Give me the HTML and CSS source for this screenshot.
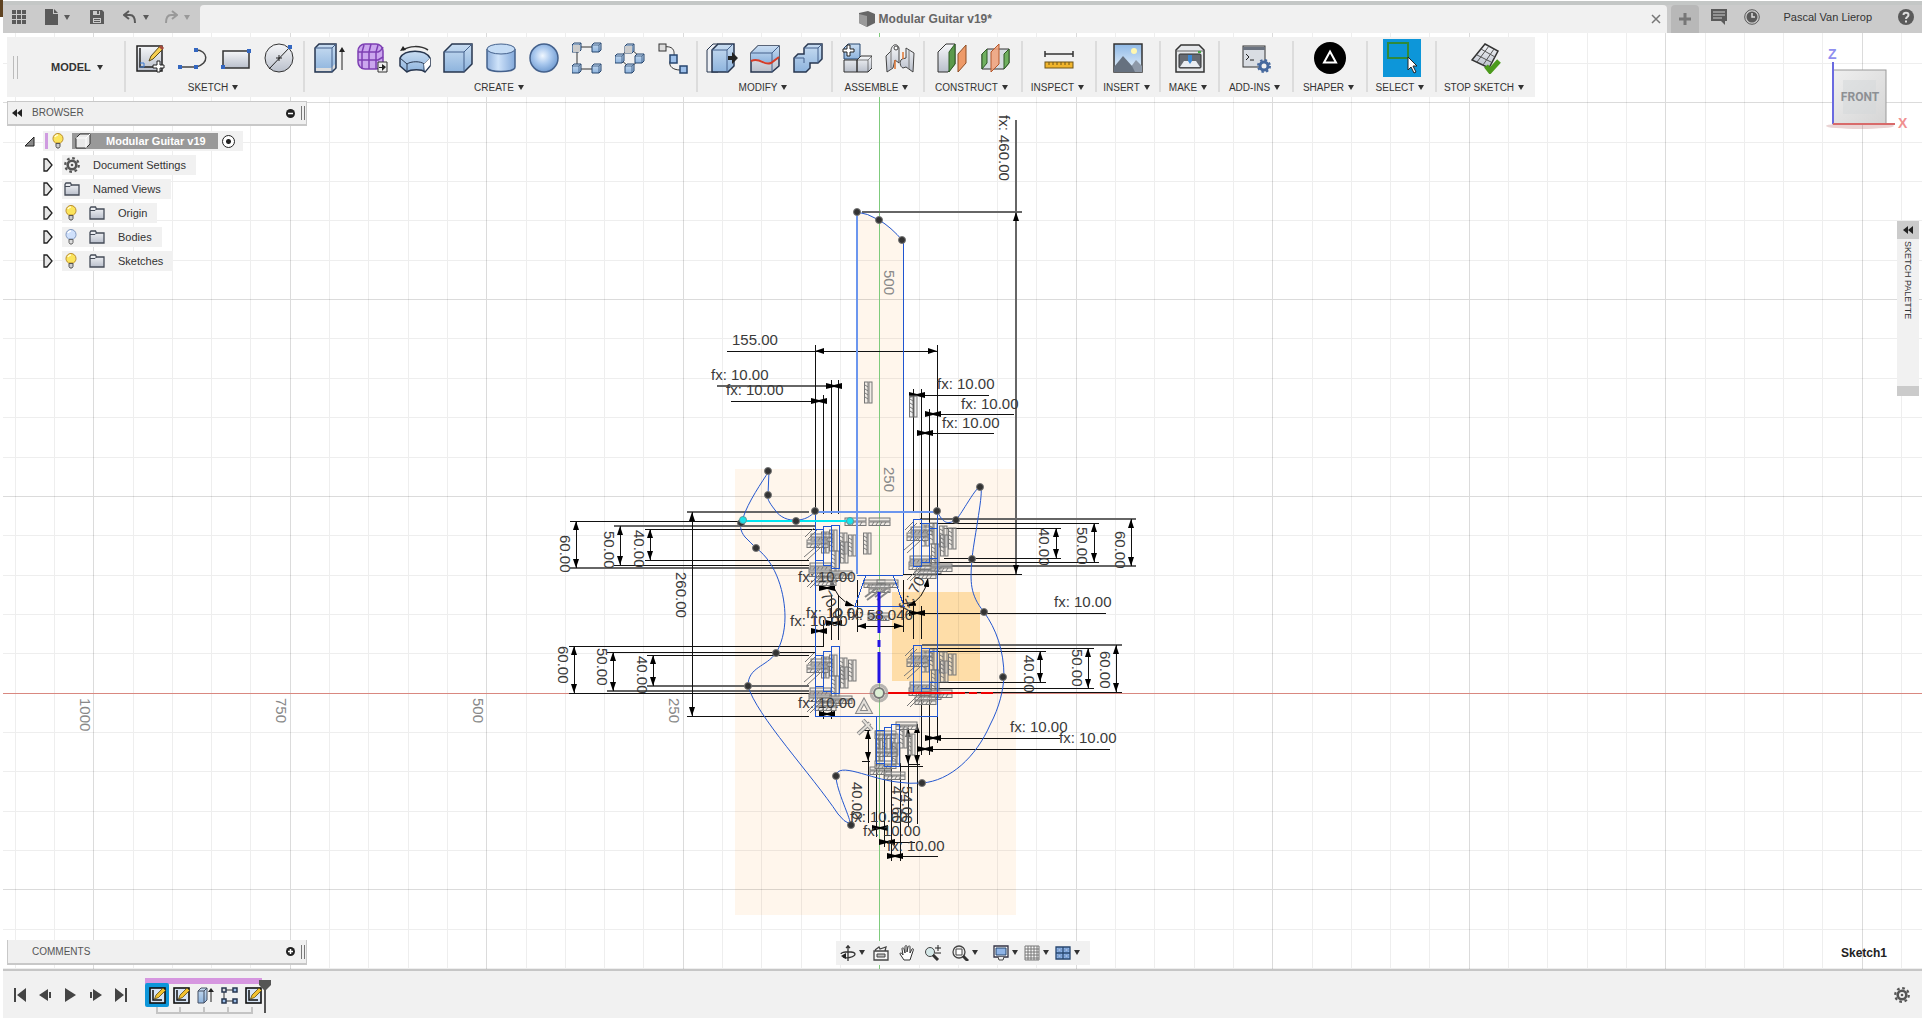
FILE: index.html
```html
<!DOCTYPE html>
<html lang="en">
<head>
<meta charset="utf-8">
<title>Modular Guitar v19*</title>
<link rel="stylesheet" href="styles.css">
</head>
<body>
<svg class="defs" aria-hidden="true">
<defs>
<linearGradient id="blue" x1="0" y1="0" x2="0" y2="1"><stop offset="0" stop-color="#c9ddf2"/><stop offset="1" stop-color="#8db3dd"/></linearGradient>
<linearGradient id="blueSide" x1="0" y1="0" x2="1" y2="0"><stop offset="0" stop-color="#8fb0dc"/><stop offset=".4" stop-color="#cfe3fa"/><stop offset="1" stop-color="#83a9da"/></linearGradient>
<linearGradient id="steel" x1="0" y1="0" x2="0" y2="1"><stop offset="0" stop-color="#f6f7f9"/><stop offset="1" stop-color="#b9bfcb"/></linearGradient>
<linearGradient id="sky" x1="0" y1="0" x2="0" y2="1"><stop offset="0" stop-color="#8fb9e6"/><stop offset="1" stop-color="#e8f2fb"/></linearGradient>
<linearGradient id="cubeFace" x1="0" y1="0" x2="1" y2="1"><stop offset="0" stop-color="#efefef"/><stop offset="1" stop-color="#d5d5d5"/></linearGradient>
<radialGradient id="ball" cx=".45" cy=".42" r=".6"><stop offset="0" stop-color="#f0f7ff"/><stop offset=".5" stop-color="#a9c8ee"/><stop offset="1" stop-color="#6f9ad0"/></radialGradient>
<symbol id="bulb" viewBox="0 0 12 16"><path d="M3.500 10C1.500 8.500 1 7 1 5.500a5 5 0 0 1 10 0c0 1.500-.5 3-2.500 4.500z" fill="#fbe45c" stroke="#b98b2a"/><path d="M3 4a3 3 0 0 1 3-2" fill="none" stroke="#fffbd0" stroke-width="1.500"/><path d="M4 10.500h4v3l-1 1.500h-2l-1-1.500z" fill="#ccc" stroke="#555"/></symbol>
<symbol id="bulbOff" viewBox="0 0 12 16"><path d="M3.500 10C1.500 8.500 1 7 1 5.500a5 5 0 0 1 10 0c0 1.500-.5 3-2.500 4.500z" fill="#cfe0fb" stroke="#7f96bd"/><path d="M3 4a3 3 0 0 1 3-2" fill="none" stroke="#fff" stroke-width="1.500"/><path d="M4 10.500h4v3l-1 1.500h-2l-1-1.500z" fill="#ddd" stroke="#666"/></symbol>
<symbol id="folder" viewBox="0 0 16 14"><path d="M1 13V2.500L2 1h4.500l1 2H15v10z" fill="url(#steel)" stroke="#444b57" stroke-width="1.300"/><path d="M1 4.500h5l1.500-1.500" fill="none" stroke="#444b57"/></symbol>
<symbol id="gear" viewBox="0 0 16 16"><circle cx="8" cy="8" r="4.300" fill="none" stroke="#555" stroke-width="2.600"/><circle cx="8" cy="8" r="6.800" fill="none" stroke="#555" stroke-width="2.200" stroke-dasharray="2.670 2.670"/><circle cx="8" cy="8" r="1.300" fill="#555"/></symbol>
<symbol id="closed" viewBox="0 0 10 14"><path d="M1 1l3 0 5 6-5 6H1z" fill="#e6e6e6" stroke="#222" stroke-width="1.300"/></symbol>
<symbol id="box" viewBox="0 0 16 16"><path d="M1 5l4-4h10v10l-4 4H1z" fill="#e9e9e9" stroke="#333"/><path d="M1 5h10v10M11 5l4-4" fill="none" stroke="#fff"/></symbol>
<symbol id="sketchFeature" viewBox="0 0 17 17"><rect x="1" y="1" width="15" height="15" fill="#d6e4f5" stroke="#111" stroke-width="1.600"/><path d="M4 3v10h9" fill="none" stroke="#111" stroke-width="1.500"/><path d="M5.500 12l1.500-4 7-7 2.500 2.500-7 7z" fill="#f2c230" stroke="#5a4a10" stroke-width=".8"/></symbol>
<g id="bar" fill="#ddd" fill-opacity=".45" stroke="#777"><rect x="0" y="0" width="21" height="3"/><rect x="0" y="4" width="21" height="3.500"/><path d="M3 7l2-3M7 7l2-3M11 7l2-3M15 7l2-3" fill="none"/></g>
<g id="cube8"><path d="M0 2l2-2h7v7l-2 2H0z" fill="url(#blue)" stroke="#27466f"/><path d="M0 2h7v7M7 2l2-2" fill="none" stroke="#27466f" stroke-width=".7"/></g>
<marker id="arrow" viewBox="0 0 9 6" refX="9" refY="3" markerWidth="9" markerHeight="6" markerUnits="userSpaceOnUse" orient="auto-start-reverse"><path d="M0 0l9 3-9 3z"/></marker>
<path id="bow" d="M-8-3L0-1 8-3V3L0 1-8 3z"/>
<circle id="dot" r="3.500"/>
<g id="cluster">
<g transform="rotate(90)"><use href="#bar" x="3" y="-30"/><use href="#bar" x="24" y="-32"/><use href="#bar" x="5" y="-22"/><use href="#bar" x="6" y="-40"/><use href="#bar" x="8" y="-49"/><use href="#bar" x="15" y="-41"/></g>
<use href="#bar" x="4" y="7"/><use href="#bar" x="0" y="13"/><use href="#bar" x="3" y="36"/><use href="#bar" x="2" y="42"/><use href="#bar" x="13" y="46"/><use href="#bar" x="24" y="44"/><use href="#bar" x="8" y="51"/>
<path d="M-2 10l9-9M1 12l9-9M-3 30l14-12M0 33l13-12M0 60l12-12M3 61l11-11" fill="none" stroke="#777"/>
</g>
</defs>
</svg>

<header class="titlebar">
  <nav class="quick" aria-label="Quick access">
    <button aria-label="Data panel"><svg width="14" height="14"><path d="M0 0h4v4H0zM5 0h4v4H5zM10 0h4v4h-4zM0 5h4v4H0zM5 5h4v4H5zM10 5h4v4h-4zM0 10h4v4H0zM5 10h4v4H5zM10 10h4v4h-4z" fill="#5a5a5a"/></svg></button>
    <button class="after-apps" aria-label="File"><svg width="13" height="16"><path d="M0 0h8v5h5v11H0z M9 0l4 4H9z" fill="#5a5a5a"/></svg><i class="caret"></i></button>
    <button class="after-file" aria-label="Save"><svg width="14" height="14"><path d="M0 0h12l2 2v12H0z" fill="#5a5a5a"/><path d="M3 1h7v4H3zM3 8h8v5H3z" fill="#cacaca"/><path d="M7 1h2v3H7zM4 9h6v1H4zM4 11h6v1H4z" fill="#5a5a5a"/></svg></button>
    <button class="after-save" aria-label="Undo"><svg width="14" height="14"><path d="M6 1L1 5l5 4M1 5h6c4 0 5 3 5 8" fill="none" stroke="#5a5a5a" stroke-width="2"/></svg><i class="caret"></i></button>
    <button class="after-undo" aria-label="Redo"><svg width="14" height="14"><path d="M8 1l5 4-5 4M13 5H7c-4 0-5 3-5 8" fill="none" stroke="#999" stroke-width="2"/></svg><i class="caret dim"></i></button>
  </nav>
  <div class="tab">
    <h1><svg width="16" height="16"><path d="M0 2l9-2 7 3v9l-8 4-8-4z" fill="#666"/><path d="M0 3l8 2v11l-8-4z" fill="#9a9a9a"/></svg>Modular Guitar v19*</h1>
    <button aria-label="Close"><svg width="10" height="10"><path d="M1 1l8 8M9 1L1 9" stroke="#777" stroke-width="1.500"/></svg></button>
  </div>
  <button class="newtab" aria-label="New design"><svg width="14" height="14"><path d="M7 1v12M1 7h12" stroke="#777" stroke-width="3"/></svg></button>
  <div class="account">
    <button aria-label="Comments"><svg width="16" height="16"><path d="M0 0h16v12h-2v4l-4-4H0z" fill="#5a5a5a"/><path d="M2 3h12M2 6h12M2 9h9" stroke="#ccc"/></svg></button>
    <button aria-label="Job status"><svg width="16" height="16"><circle cx="8" cy="8" r="7.300" fill="none" stroke="#5a5a5a"/><circle cx="8" cy="8" r="5.500" fill="#5a5a5a"/><path d="M8 4v4h3" fill="none" stroke="#ddd" stroke-width="1.500"/></svg></button>
    <button class="user">Pascal Van Lierop</button>
    <button aria-label="Help"><svg width="16" height="16"><circle cx="8" cy="8" r="8" fill="#5a5a5a"/><path d="M5.500 6c0-3 5-3 5 0 0 2-2.500 2-2.500 4M8 11.500v2" fill="none" stroke="#ddd" stroke-width="2"/></svg></button>
  </div>
</header>

<main class="workspace">
<svg class="canvas" viewBox="3 33 1919 936" preserveAspectRatio="xMidYMid slice" role="img" aria-label="Guitar sketch">
<rect x="735" y="469" width="281" height="446" fill="#fff6ec"/>
<path d="M857 212q25 3 46 29v334h-46z" fill="#fff6ec"/>
<rect x="892" y="592" width="88" height="89" fill="#fedda8"/>
<path class="minor" d="M15 33v936M54 33v936M133 33v936M172 33v936M211 33v936M250 33v936M329 33v936M368 33v936M408 33v936M447 33v936M526 33v936M565 33v936M604 33v936M643 33v936M722 33v936M761 33v936M801 33v936M840 33v936M919 33v936M958 33v936M997 33v936M1036 33v936M1115 33v936M1154 33v936M1194 33v936M1233 33v936M1312 33v936M1351 33v936M1390 33v936M1429 33v936M1508 33v936M1547 33v936M1587 33v936M1626 33v936M1705 33v936M1744 33v936M1783 33v936M1822 33v936M1901 33v936M3 63h1919M3 142h1919M3 181h1919M3 220h1919M3 260h1919M3 338h1919M3 378h1919M3 417h1919M3 457h1919M3 535h1919M3 575h1919M3 614h1919M3 653h1919M3 732h1919M3 771h1919M3 811h1919M3 850h1919M3 929h1919M3 968h1919"/>
<path class="major" d="M93 33v936M290 33v936M486 33v936M683 33v936M1076 33v936M1272 33v936M1469 33v936M1665 33v936M1862 33v936M3 102h1919M3 299h1919M3 496h1919M3 889h1919"/>
<path class="axis-z" d="M879 33v936"/>
<path class="axis-x" d="M3 693h1919"/>
<g class="scale">
<text transform="translate(80 698) rotate(90)">1000</text><text transform="translate(276 698) rotate(90)">750</text><text transform="translate(473 698) rotate(90)">500</text><text transform="translate(669 698) rotate(90)">250</text>
<text transform="translate(884 270) rotate(90)">500</text><text transform="translate(884 467) rotate(90)">250</text>
</g>

<g class="heavy">
<path d="M862 212h160M1016 120v92M687 512h122M570 568h239M614 526h201M647 686h162M607 691h202M920 519h216M920 566h216M922 645h200M717 386h110"/>
<path d="M1016 212v362" marker-start="url(#arrow)" marker-end="url(#arrow)"/>
</g>
<g class="dim">
<path d="M570 521h172M614 565h195M645 529h170M645 560h164M687 716h122M569 646h255M569 693h240M607 652h208M647 655h162"/>
<path d="M920 523h179M920 562h179M944 528h117M944 558h117M903 574h119M922 648h172M922 688h172M930 651h116M930 682h116M922 692h200"/>
<path d="M727 351h88M815 345v167M937 345v167M831 380v134M838 380v134M823 395v119M913 389v122M921 389v135M929 409v115"/>
<path d="M731 401h95M909 395h80M925 414h89M917 433h77M908 613h198M925 738h135M918 749h192"/>
<path d="M857 580v52M903 580v52M831 595v45M838 595v45M823 620v26M913 606v33M921 606v33M823 700v19M831 700v19M921 694v61M929 694v61M937 716v27"/>
<path d="M876 763v74M884 763v84M891 763v98M900 763v98M872 828h15M880 842h35M888 856h50M862 730h8M862 761h8M908 728v98M917 724v100M868 761v62M895 766h28M908 764h12"/>
<g marker-start="url(#arrow)">
<path d="M815 351h122" marker-end="url(#arrow)"/><path d="M576 521v47" marker-end="url(#arrow)"/><path d="M620 526v39" marker-end="url(#arrow)"/><path d="M650 529v31" marker-end="url(#arrow)"/><path d="M692 512v204" marker-end="url(#arrow)"/><path d="M574 646v47" marker-end="url(#arrow)"/><path d="M613 652v39" marker-end="url(#arrow)"/><path d="M653 655v31" marker-end="url(#arrow)"/>
<path d="M1056 528v30" marker-end="url(#arrow)"/><path d="M1094 523v39" marker-end="url(#arrow)"/><path d="M1131 519v47" marker-end="url(#arrow)"/><path d="M1040 651v31" marker-end="url(#arrow)"/><path d="M1088 648v40" marker-end="url(#arrow)"/><path d="M1116 645v47" marker-end="url(#arrow)"/>
<path d="M857 626h46" marker-end="url(#arrow)"/><path d="M868 730v31" marker-end="url(#arrow)"/><path d="M908 728v36" marker-end="url(#arrow)"/><path d="M917 724v40" marker-end="url(#arrow)"/>
</g>
</g>
<g class="arc"><path d="M831 578q4 22 23 28" marker-start="url(#arrow)" marker-end="url(#arrow)"/><path d="M928 578q-4 22-21 28" marker-start="url(#arrow)" marker-end="url(#arrow)"/></g>
<use href="#bow" x="834" y="386"/><use href="#bow" x="819" y="401"/><use href="#bow" x="917" y="395"/><use href="#bow" x="933" y="414"/><use href="#bow" x="925" y="433"/><use href="#bow" x="827" y="588"/><use href="#bow" x="834" y="623"/><use href="#bow" x="819" y="631"/><use href="#bow" x="917" y="613"/><use href="#bow" x="827" y="714"/><use href="#bow" x="933" y="738"/><use href="#bow" x="925" y="749"/><use href="#bow" x="880" y="828"/><use href="#bow" x="887" y="842"/><use href="#bow" x="895" y="856"/>

<use href="#cluster" x="807" y="527"/><use href="#cluster" x="807" y="652"/>
<use href="#cluster" x="907" y="520"/><use href="#cluster" x="907" y="646"/>
<use href="#bar" x="845" y="518"/><use href="#bar" x="869" y="518"/>
<g transform="translate(872 382) rotate(90)"><use href="#bar"/></g><g transform="translate(917 396) rotate(90)"><use href="#bar"/></g><g transform="translate(871 533) rotate(90)"><use href="#bar"/></g>
<use href="#bar" x="864" y="580"/><use href="#bar" x="877" y="580"/><use href="#bar" x="869" y="585"/><use href="#bar" x="868" y="613"/>
<path d="M865 597l12-9M867 600l12-9M875 597l12-9M877 600l12-9" fill="none" stroke="#888" stroke-width="2"/>
<g transform="translate(883 731) rotate(90)"><use href="#bar"/><use href="#bar" x="9"/><use href="#bar" x="4" y="-7"/><use href="#bar" x="3" y="-15"/><use href="#bar" x="12" y="-17"/><use href="#bar" x="-4" y="-24"/><use href="#bar" x="3" y="-32"/></g>
<use href="#bar" x="870" y="767"/><use href="#bar" x="884" y="772"/><use href="#bar" x="875" y="761"/><use href="#bar" x="896" y="722"/><use href="#bar" x="875" y="731"/><use href="#bar" x="876" y="749"/>
<g class="glyph"><path id="relation" d="M864 701l6 11h-12zM858 734l12-11M863 720l9 10"/></g>
<use class="glyph-core" href="#relation"/>

<g class="sketch">
<path d="M857 212v362M903 241v333"/><path class="wide" d="M857 212v362M815 512h122"/>
<path d="M815 512v204h122V512M857 575h46M866 575l-11 31h49l-11-31"/>
<path d="M815 529h8v31h-8M823 526h8v39h-8zM831 525h8v43h-8zM913 519h8v47h-8zM921 523h8v39h-8zM929 528h8v30h-8z"/>
<path d="M815 655h8v31h-8M823 651h8v40h-8zM831 646h8v47h-8zM913 645h8v47h-8zM921 648h8v40h-8zM929 651h8v31h-8z"/>
<path d="M876 716v47h8v-33h-8M884 727h7v39h-7zM891 724h8v42h-8z"/>
</g>
<g class="curve">
<path d="M857 212Q867 213 879 220T903 241"/>
<path d="M815 511C808 522 785 525 775 510 768 501 767 498 768 495L769 471 C762 482 748 502 743 518 C739 524 740 531 745 537 C749 541 753 545 756 548 C777 563 785 595 785 617 C785 632 781 645 776 653 C766 667 748 667 748 686 C756 715 812 775 838 814 Q844 822 850 824 C852 821 836 790 836 776 C838 761 870 779 897 782 Q910 784 922 783 C950 781 976 757 990 725 C1000 706 1003 690 1004 677 C1004 650 996 629 984 612 C970 595 970 582 972 559 C973 545 983 495 981 489 C980 479 963 512 956 520 C947 525 943 523 937 511"/>
</g>
<path d="M743 521h107" stroke="#00e5f0" stroke-width="2"/>
<path d="M888 693h77M969 693h8M981 693h12" stroke="#f00000" stroke-width="2"/>
<path d="M879 592v41M879 640v7M879 652v31" stroke="#2313e2" stroke-width="3"/>
<g fill="none"><circle cx="879" cy="693" r="8" stroke="#888" stroke-width="3" opacity=".6"/><circle cx="879" cy="693" r="5" stroke="#777" stroke-width="2" fill="#ddf0d5"/></g>
<g class="points"><use href="#dot" x="857" y="212"/><use href="#dot" x="879" y="220"/><use href="#dot" x="902" y="240"/><use href="#dot" x="768" y="471"/><use href="#dot" x="768" y="495"/><use href="#dot" x="796" y="521"/><use href="#dot" x="815" y="511"/><use href="#dot" x="741" y="523"/><use href="#dot" x="756" y="548"/><use href="#dot" x="776" y="653"/><use href="#dot" x="748" y="686"/><use href="#dot" x="937" y="511"/><use href="#dot" x="956" y="520"/><use href="#dot" x="980" y="487"/><use href="#dot" x="972" y="559"/><use href="#dot" x="984" y="612"/><use href="#dot" x="1003" y="677"/><use href="#dot" x="836" y="776"/><use href="#dot" x="922" y="783"/><use href="#dot" x="851" y="825"/></g>
<g fill="#19e3ea" stroke="#5b9a9c"><circle cx="743" cy="520" r="3.500"/><circle cx="850" cy="521" r="3.500"/></g>

<g class="value">
<text x="732" y="345">155.00</text><text x="711" y="380">fx: 10.00</text><text x="726" y="395">fx: 10.00</text><text x="937" y="389">fx: 10.00</text><text x="961" y="409">fx: 10.00</text><text x="942" y="428">fx: 10.00</text>
<text x="798" y="582">fx: 10.00</text><text x="806" y="618">fx: 10.00</text><text x="790" y="626">fx: 10.00</text><text x="847" y="620">fx: 58.046</text><text x="798" y="708">fx: 10.00</text><text x="1054" y="607">fx: 10.00</text><text x="1010" y="732">fx: 10.00</text><text x="1059" y="743">fx: 10.00</text>
<text x="850" y="822">fx: 10.00</text><text x="863" y="836">fx: 10.00</text><text x="887" y="851">fx: 10.00</text>
<text transform="translate(999 115) rotate(90)">fx: 460.00</text>
<text transform="translate(560 535) rotate(90)">60.00</text><text transform="translate(604 531) rotate(90)">50.00</text><text transform="translate(634 530) rotate(90)">40.00</text><text transform="translate(676 572) rotate(90)">260.00</text>
<text transform="translate(558 646) rotate(90)">60.00</text><text transform="translate(597 648) rotate(90)">50.00</text><text transform="translate(637 656) rotate(90)">40.00</text>
<text transform="translate(1039 528) rotate(90)">40.00</text><text transform="translate(1077 527) rotate(90)">50.00</text><text transform="translate(1115 531) rotate(90)">60.00</text>
<text transform="translate(1024 655) rotate(90)">40.00</text><text transform="translate(1072 649) rotate(90)">50.00</text><text transform="translate(1100 651) rotate(90)">60.00</text>
<text transform="translate(852 782) rotate(90)">40.00</text><text transform="translate(892 786) rotate(90)">47.60</text><text transform="translate(902 786) rotate(90)">54.00</text>
<text transform="translate(820 595) rotate(58)">70.0</text><text transform="translate(907 612) rotate(-60)">fx: 70</text>
</g>
</svg>

<div class="overlay">
<div class="left">
<div class="toolbar" role="toolbar" aria-label="Design tools">
  <div class="workspace-switch"><span class="grip"></span><button>MODEL<i class="caret"></i></button></div>
  <section><div class="tools">
    <button aria-label="Create sketch"><svg width="30" height="30"><rect x="2" y="3" width="25" height="25" fill="url(#steel)" stroke="#222" stroke-width="1.500"/><path d="M5 5v19h15" fill="none" stroke="#222" stroke-width="1.500"/><path d="M5 24h4v-4H5" fill="none" stroke="#3a7bd5"/><path d="M14 18l2-5L25 3l3 3-10 10z" fill="#f6cf52" stroke="#5b4a1a"/><path d="M25 3l3 3" stroke="#a34a3d" stroke-width="3"/><path d="M22 18h3v4h4v3h-4v4h-3v-4h-4v-3h4z" fill="#fff" stroke="#222"/></svg></button>
    <button aria-label="Line"><svg width="30" height="30"><path d="M2 24h16c14-3 12-17 0-17" fill="none" stroke="#444" stroke-width="1.500"/><path d="M0 22h4v4H0zM16 22h4v4h-4zM16 5h4v4h-4z" fill="#3467c0"/></svg></button>
    <button aria-label="Rectangle"><svg width="30" height="30"><rect x="2" y="8" width="26" height="17" fill="url(#steel)" stroke="#333" stroke-width="1.500"/><path d="M0 22h4v4H0zM26 6h4v4h-4z" fill="#3467c0"/></svg></button>
    <button aria-label="Circle"><svg width="30" height="30"><circle cx="15" cy="15" r="14" fill="url(#steel)" stroke="#333"/><path d="M5 26L26 4M12 15h6M15 12v6" stroke="#222"/><path d="M24 2h4v4h-4z" fill="#3467c0"/></svg></button>
  </div><button class="menu">SKETCH<i class="caret"></i></button></section>
  <section><div class="tools">
    <button aria-label="Extrude"><svg width="32" height="30"><path d="M2 5l4-4h17v24l-4 4H2z" fill="url(#blue)" stroke="#27364f" stroke-width="1.500"/><path d="M3 25h15l4-4v4l-4 3H3z" fill="#ddd"/><path d="M2 5h17v24M19 5l4-4" fill="none" stroke="#44618c"/><path d="M29 27V7" stroke="#222"/><path d="M26 9l3-5 3 5z" fill="#222"/></svg></button>
    <button aria-label="Form"><svg width="32" height="30"><rect x="2" y="1" width="25" height="25" rx="7" fill="#cba6ee" stroke="#7d3fb3" stroke-width="1.500"/><path d="M2 9h20c3-1 4-3 5-5M2 17h20l5-3M8 2L6 9v17M15 1l-2 8v17M22 2l-2 7v17" fill="none" stroke="#7d3fb3" stroke-width="1.500"/><path d="M22 19h9v10h-9z" fill="#eee" stroke="#333"/><path d="M23 24h3v-3l4 3-4 4v-3h-3z" fill="#222"/></svg></button>
    <button aria-label="Revolve"><svg width="32" height="30"><path d="M1 15c5-9 25-9 30 0v8l-5 6c-3-3-14-3-18 0l-7-6z" fill="url(#blue)" stroke="#27364f" stroke-width="1.500"/><path d="M1 15l7 6v8M8 21c4-3 14-3 17 0v8M25 21l6-6" fill="none" stroke="#27364f"/><path d="M25 21l6-6v7l-5 6z" fill="#fff"/><path d="M29 7C21 2 10 3 4 7" fill="none" stroke="#333" stroke-width="1.500"/><path d="M1 8l3-5 3 4z" fill="#222"/></svg></button>
    <button aria-label="Box"><svg width="30" height="30"><path d="M1 9l8-8h20v20l-8 8H1z" fill="url(#blue)" stroke="#27364f" stroke-width="1.500"/><path d="M1 9h20v20M21 9l8-8" fill="none" stroke="#44618c"/></svg></button>
    <button aria-label="Cylinder"><svg width="30" height="30"><path d="M1 6v18c0 6 28 6 28 0V6" fill="url(#blueSide)" stroke="#44618c" stroke-width="1.500"/><ellipse cx="15" cy="6" rx="14" ry="5" fill="#c5dcf5" stroke="#44618c"/></svg></button>
    <button aria-label="Sphere"><svg width="30" height="30"><circle cx="15" cy="15" r="14" fill="url(#ball)" stroke="#44618c" stroke-width="1.500"/></svg></button>
    <button aria-label="Rectangular pattern"><svg width="30" height="32"><path d="M5 5h20M5 5v22h20" fill="none" stroke="#333"/><use href="#cube8" x="0" y="1"/><path d="M1 3h7v7H1z" fill="#ccc"/><use href="#cube8" x="20" y="1"/><use href="#cube8" x="0" y="22"/><use href="#cube8" x="20" y="22"/></svg></button>
    <button aria-label="Circular pattern"><svg width="30" height="32"><path d="M15 6l11 10-11 10L4 16z" fill="none" stroke="#333"/><use href="#cube8" x="10" y="2"/><path d="M10 4h7v7h-7z" fill="#ccc"/><use href="#cube8" x="20" y="12"/><use href="#cube8" x="0" y="12"/><use href="#cube8" x="10" y="22"/></svg></button>
    <button aria-label="Path pattern"><svg width="30" height="32"><path d="M4 5c14-2 12 6 12 10-7 4-6 14 9 13" fill="none" stroke="#333"/><rect x="1" y="2" width="7" height="7" fill="#ddd" stroke="#333"/><rect x="12" y="13" width="7" height="8" fill="#9dc0ea" stroke="#27466f" stroke-width="1.500"/><rect x="22" y="24" width="7" height="7" fill="#9dc0ea" stroke="#27466f" stroke-width="1.500"/></svg></button>
  </div><button class="menu">CREATE<i class="caret"></i></button></section>
  <section><div class="tools">
    <button aria-label="Press pull"><svg width="32" height="30"><path d="M1 7l6-6h5v28H1z" fill="#eceff4" stroke="#27364f"/><path d="M6 7l6-6h16v22l-6 6H6z" fill="url(#blue)" stroke="#27364f" stroke-width="1.500"/><path d="M6 7h15v22M21 7l6-6" fill="none" stroke="#44618c"/><path d="M22 13h4v-4l6 6-6 6v-4h-4z" fill="#222"/></svg></button>
    <button aria-label="Shell"><svg width="30" height="30"><path d="M1 10l7-7h21v20l-7 6H1z" fill="url(#steel)" stroke="#27364f" stroke-width="1.500"/><path d="M1 10l7-7h21v11l-7 5c-7 3-9-5-21-1z" fill="url(#blue)"/><path d="M1 10h21v19M22 10l7-7" fill="none" stroke="#44618c"/><path d="M1 18c10-4 12 5 20 2l8-6" fill="none" stroke="#d53c28" stroke-width="2"/></svg></button>
    <button aria-label="Combine"><svg width="30" height="30"><path d="M1 15l4-4h6V5l4-4h14v15l-4 4h-8v5l-4 4H1z" fill="url(#blue)" stroke="#27364f" stroke-width="1.500"/><path d="M1 15h10v5M11 5h14v15M25 5l4-4" fill="none" stroke="#44618c"/></svg></button>
  </div><button class="menu">MODIFY<i class="caret"></i></button></section>
  <section><div class="tools">
    <button aria-label="New component"><svg width="30" height="30"><path d="M2 5l4-4h12v15H2z" fill="url(#blue)" stroke="#27466f"/><path d="M2 17h13v12H2zM15 17l4-4h11v12l-4 4H15z" fill="url(#steel)" stroke="#333"/><path d="M15 17h11v12M26 17l4-4" fill="none" stroke="#333" stroke-width=".6"/><path d="M5 2h3v4h4v3H8v4H5V9H1V6h4z" fill="#fff" stroke="#222"/></svg></button>
    <button aria-label="Joint"><svg width="30" height="30"><path d="M1 13l5-5c0-6 6-9 8-3v15l-4-3-2 8-6 4zM29 10l-8-5v10l-4 1c-3 2-2 8 1 9l3-1 7 5z" fill="url(#steel)" stroke="#444"/><path d="M6 8v17M24 7v19" stroke="#777"/><circle cx="11" cy="5" r="2" fill="#fff" stroke="#444"/><path d="M10 17v9M18 9v7" stroke="#e07632" stroke-width="1.500"/></svg></button>
  </div><button class="menu">ASSEMBLE<i class="caret"></i></button></section>
  <section><div class="tools">
    <button aria-label="Offset plane"><svg width="30" height="30"><path d="M1 9l8-8h9v20l-7 8H1z" fill="url(#steel)" stroke="#333"/><path d="M12 9l6-8v20l-6 8z" fill="#5b9a4b" stroke="#2d5a24"/><path d="M21 11l8-9v18l-8 9z" fill="#ee9a68" stroke="#8f4c23"/></svg></button>
    <button aria-label="Midplane"><svg width="30" height="30"><path d="M2 11l5-5h22v14l-5 6H2z" fill="#d7dde2" stroke="#333"/><path d="M2 11l5-5v14l-5 6zM24 11l5-5v14l-5 6z" fill="#70b060" stroke="#2d5a24"/><path d="M11 9l8-8v20l-8 8z" fill="#f2a27a" fill-opacity=".85" stroke="#b5562a"/></svg></button>
  </div><button class="menu">CONSTRUCT<i class="caret"></i></button></section>
  <section><div class="tools"><button aria-label="Measure"><svg width="30" height="30"><path d="M1 11h28M1 8v6M29 8v6" stroke="#333" stroke-width="1.500"/><rect x="1" y="19" width="28" height="6" fill="#f1b52c" stroke="#6e5518"/><path d="M5 19v3M9 19v3M13 19v3M17 19v3M21 19v3M25 19v3" stroke="#6e5518"/></svg></button></div><button class="menu">INSPECT<i class="caret"></i></button></section>
  <section><div class="tools"><button aria-label="Insert image"><svg width="30" height="30"><rect x="1" y="1" width="28" height="28" fill="url(#sky)" stroke="#333" stroke-width="1.500"/><circle cx="21" cy="8" r="3" fill="#fff7b0"/><path d="M14 29l9-12 6 6v6z" fill="#8e99a8"/><path d="M1 24l9-11 9 10 3 6H1z" fill="#66717f"/></svg></button></div><button class="menu">INSERT<i class="caret"></i></button></section>
  <section><div class="tools"><button aria-label="3D print"><svg width="30" height="30"><path d="M1 7l5-5h18l5 5v22H1z" fill="#e6e8eb" stroke="#333" stroke-width="1.500"/><path d="M1 8h28" stroke="#666"/><rect x="4" y="11" width="22" height="14" rx="1" fill="#666b73" stroke="#333"/><path d="M9 18h12l4 6H5z" fill="#e9edf2"/><path d="M13 12h4v6l-2 3-2-3z" fill="#3d88d4"/><path d="M23 9h3" stroke="#4a4" stroke-width="2"/></svg></button></div><button class="menu">MAKE<i class="caret"></i></button></section>
  <section><div class="tools"><button aria-label="Scripts"><svg width="30" height="30"><rect x="2" y="3" width="22" height="21" fill="#d9dde3" stroke="#333"/><path d="M2 4h22v3H2z" fill="#6b7380"/><path d="M5 11l3 3-3 3M9 17h4" fill="none" stroke="#222"/><circle cx="23" cy="23" r="4" fill="#f1f1f1" stroke="#46699e" stroke-width="3"/><circle cx="23" cy="23" r="6" fill="none" stroke="#46699e" stroke-width="2" stroke-dasharray="2.360 2.360"/></svg></button></div><button class="menu">ADD-INS<i class="caret"></i></button></section>
  <section><div class="tools"><button aria-label="Shaper"><svg width="32" height="32"><circle cx="16" cy="16" r="16"/><path d="M16 9.500l6 11H10z" fill="none" stroke="#fff" stroke-width="2"/></svg></button></div><button class="menu">SHAPER<i class="caret"></i></button></section>
  <section><div class="tools"><button class="active" aria-label="Select" aria-pressed="true"><svg width="38" height="38"><rect x="5" y="4" width="20" height="15" fill="none" stroke="#2f8a3c" stroke-width="2"/><path d="M25 18v13l3-3 3 6 2-1-3-6h4z" fill="#fff" stroke="#222"/></svg></button></div><button class="menu">SELECT<i class="caret"></i></button></section>
  <section><div class="tools"><button aria-label="Stop sketch"><svg width="30" height="32"><path d="M14 2l13 7-9 17L1 18z" fill="url(#steel)" stroke="#333" stroke-width="1.500"/><path d="M18 4L6 20M23 7L12 23M10 7l14 8M6 13l14 7" stroke="#555"/><path d="M15 24l4 5 9-10" fill="none" stroke="#4c9a1c" stroke-width="5"/></svg></button></div><button class="menu">STOP SKETCH<i class="caret"></i></button></section>
</div>

<div class="panel">
  <button aria-label="Collapse"><svg width="10" height="8"><path d="M5 0v8L0 4zM10 0v8L5 4z" fill="#222"/></svg></button>
  <h2>BROWSER</h2>
  <button aria-label="Hide"><svg width="9" height="9"><circle cx="4.500" cy="4.500" r="4.500" fill="#222"/><path d="M2 4.500h5" stroke="#fff" stroke-width="1.500"/></svg></button>
  <span class="grip small"></span>
</div>
<ul class="tree">
  <li class="root"><svg width="11" height="11"><path d="M10 1v9H1z" fill="#888" stroke="#222"/></svg><div class="chip"><span class="mark"></span><svg width="12" height="16"><use href="#bulb"/></svg><strong><svg width="16" height="16"><use href="#box"/></svg>Modular Guitar v19</strong><input type="radio" checked aria-label="Active component"></div></li>
  <li><svg width="10" height="14"><use href="#closed"/></svg><div class="chip"><svg width="16" height="16"><use href="#gear"/></svg><span>Document Settings</span></div></li>
  <li><svg width="10" height="14"><use href="#closed"/></svg><div class="chip"><svg width="16" height="14"><use href="#folder"/></svg><span>Named Views</span></div></li>
  <li><svg width="10" height="14"><use href="#closed"/></svg><div class="chip"><svg class="light" width="12" height="16"><use href="#bulb"/></svg><svg width="16" height="14"><use href="#folder"/></svg><span>Origin</span></div></li>
  <li><svg width="10" height="14"><use href="#closed"/></svg><div class="chip"><svg class="light" width="12" height="16"><use href="#bulbOff"/></svg><svg width="16" height="14"><use href="#folder"/></svg><span>Bodies</span></div></li>
  <li><svg width="10" height="14"><use href="#closed"/></svg><div class="chip"><svg class="light" width="12" height="16"><use href="#bulb"/></svg><svg width="16" height="14"><use href="#folder"/></svg><span>Sketches</span></div></li>
</ul>
</div>

<div class="right">
  <svg class="viewcube" width="90" height="90" role="img" aria-label="View cube"><rect x="11" y="24" width="53" height="54" fill="url(#cubeFace)" stroke="#999"/><rect x="21" y="34" width="33" height="34" fill="#d4d7da" opacity=".5"/><ellipse cx="38" cy="80" rx="34" ry="3" fill="#a55" opacity=".25"/><path d="M11 16v62" stroke="#6a6ae0" stroke-width="2"/><path d="M11 78h62" stroke="#d86a6a" stroke-width="2"/><text x="38" y="55" text-anchor="middle" class="face">FRONT</text><text x="6" y="13" class="z">Z</text><text x="76" y="82" class="x">X</text></svg>
  <div class="palette"><button aria-label="Expand"><svg width="10" height="8"><path d="M5 0v8L0 4zM10 0v8L5 4z" fill="#222"/></svg></button><span>SKETCH PALETTE</span></div>
</div>

<div class="bottom">
  <div class="panel comments"><h2>COMMENTS</h2><button aria-label="Add"><svg width="9" height="9"><circle cx="4.500" cy="4.500" r="4.500" fill="#222"/><path d="M2 4.500h5M4.500 2v5" stroke="#fff" stroke-width="1.500"/></svg></button><span class="grip small"></span></div>
  <div class="navbar" role="toolbar" aria-label="Navigation">
    <button aria-label="Orbit"><svg width="16" height="16"><path d="M8 0v16M6 3l2-2 2 2M3 12c3 2 12 0 12-3S1 6 1 9" fill="none" stroke="#333" stroke-width="1.300"/><path d="M6 8v6l-5-3z" fill="#222"/></svg><i class="caret"></i></button>
    <button class="home" aria-label="Look at"><svg width="16" height="16"><path d="M1 6h14v9H1zM2 5l4-3 1 2 6-2-1 4" fill="#f5f5f5" stroke="#444" stroke-width="1.300"/><path d="M4 9h8v3H4z" fill="#bbb" stroke="#444"/></svg></button>
    <button aria-label="Pan"><svg width="16" height="16"><path d="M5 15L1 9c0-2 2-1 3 1L3 4c0-2 2-1 2 0l1 4V2c0-2 2-2 2 0v5l1-5c1-2 2-1 2 0v6l2-4c1-1 2 0 1 2l-3 9z" fill="#fff" stroke="#333"/></svg></button>
    <button aria-label="Zoom"><svg width="17" height="16"><circle cx="5" cy="7" r="4.500" fill="#d5e8e8" stroke="#444"/><path d="M8 10l5 5" stroke="#333" stroke-width="3"/><path d="M13 0v6M10 3h6M10 8h6" stroke="#222"/></svg></button>
    <button aria-label="Fit"><svg width="17" height="16"><circle cx="7" cy="7" r="6" fill="#eee" stroke="#444" stroke-width="1.300"/><path d="M4 4h6v6H4z" fill="#fff" stroke="#444"/><path d="M11 11l5 5" stroke="#333" stroke-width="3"/></svg><i class="caret"></i></button>
    <button class="display" aria-label="Display settings"><svg width="16" height="16"><path d="M1 1h14v11H1z" fill="#f5f5f5" stroke="#334" stroke-width="1.300"/><path d="M3 3h10v7H3z" fill="#8fb4e6" stroke="#27466f"/><path d="M5 12l1 3h4l1-3" fill="#eee" stroke="#444"/></svg><i class="caret"></i></button>
    <button aria-label="Grid settings"><svg width="16" height="16"><path d="M1 1h14v14H1zM4 1v14M7 1v14M10 1v14M13 1v14M1 4h14M1 7h14M1 10h14M1 13h14" fill="#f8f8f8" stroke="#777"/></svg><i class="caret"></i></button>
    <button aria-label="Viewports"><svg width="16" height="14"><path d="M1 1h14v12H1z" fill="#8fb4e6" stroke="#27466f" stroke-width="1.300"/><path d="M8 1v12M1 7h14" stroke="#27466f" stroke-width="1.300"/><path d="M3 3h3v2H3zM10 3h3v2h-3zM3 9h3v2H3zM10 9h3v2h-3z" fill="#c5daf5" stroke="#4c72b0" stroke-width=".6"/></svg><i class="caret"></i></button>
  </div>
  <strong class="status">Sketch1</strong>
</div>
</div>
</main>

<footer class="timeline">
  <div class="playback">
    <button aria-label="Start"><svg width="13" height="16"><path d="M0 1h2v14H0zM12 1v14L3 8z" fill="#444"/></svg></button>
    <button aria-label="Step back"><svg width="13" height="16"><path d="M9 2v12L0 8zM10 5h2v6h-2z" fill="#444"/></svg></button>
    <button aria-label="Play"><svg width="13" height="16"><path d="M1 1v14l11-7z" fill="#444"/></svg></button>
    <button aria-label="Step forward"><svg width="13" height="16"><path d="M4 2v12l9-6zM1 5h2v6H1z" fill="#444"/></svg></button>
    <button aria-label="End"><svg width="13" height="16"><path d="M11 1h2v14h-2zM1 1v14l9-7z" fill="#444"/></svg></button>
  </div>
  <div class="history">
    <div class="features">
      <button class="active" aria-label="Sketch 1"><svg width="17" height="17"><use href="#sketchFeature"/></svg></button>
      <button aria-label="Sketch 2"><svg width="17" height="17"><use href="#sketchFeature"/></svg></button>
      <button aria-label="Extrude 1"><svg width="17" height="17"><path d="M1 4l3-3h6v12l-3 3H1z" fill="url(#blue)" stroke="#444f63"/><path d="M7 4v12M1 4h6l3-3" fill="none" stroke="#444f63"/><path d="M14 15V3" stroke="#222"/><path d="M11 5l3-4 3 4z" fill="#222"/></svg></button>
      <button aria-label="Pattern 1"><svg width="17" height="17"><path d="M3 3h11M3 3v11h11" fill="none" stroke="#333"/><rect x="1" y="1" width="4" height="4" fill="#ddd" stroke="#27364f" stroke-width="1.500"/><path d="M12 1h4v4h-4zM1 12h4v4H1zM12 12h4v4h-4z" fill="#9dc0ea" stroke="#27364f" stroke-width="1.500"/></svg></button>
      <button aria-label="Sketch 3"><svg width="17" height="17"><use href="#sketchFeature"/></svg></button>
    </div>
    <svg class="ties" width="97" height="7"><path d="M1 0v6h95V0M24 0v6M48 0v6M72 0v6" fill="none" stroke="#c4c4c4" stroke-width="2"/></svg>
  </div>
  <svg class="playhead" width="12" height="33"><path d="M0 0h12v5L7 10v23H5V10L0 5z" fill="#555"/></svg>
  <button class="prefs" aria-label="Preferences"><svg width="16" height="16"><use href="#gear"/></svg></button>
</footer>
</body>
</html>
```
FILE: styles.css
```css
* { box-sizing: border-box; }
body {
  margin: 0;
  padding: 1px 0 0 3px;
  height: 100vh;
  display: flex;
  flex-direction: column;
  overflow: hidden;
  background: #fff linear-gradient(#5f4322, #5f4322) no-repeat 0 0 / 3px 17px;
  font: 11px/14px "Liberation Sans", Arial, sans-serif;
  color: #333;
}
button {
  display: flex;
  align-items: center;
  justify-content: center;
  margin: 0;
  padding: 0;
  border: 0;
  background: none;
  font: inherit;
  color: inherit;
}
svg { display: block; flex: none; }
h1, h2 { margin: 0; }
.defs { position: absolute; width: 0; height: 0; }
.caret {
  width: 0;
  margin-left: 4px;
  border: 3px solid transparent;
  border-top: 5px solid #333;
  border-bottom: 0;
}
.caret.dim { border-top-color: #999; }

.titlebar {
  display: flex;
  height: 32px;
  flex: none;
  background: linear-gradient(#c4c7c6 4px, #cbcbcb 4px);
}
.quick { display: flex; width: 197px; padding-left: 9px; }
.quick .caret { margin-left: 6px; border-top-color: #5a5a5a; }
.quick .caret.dim { border-top-color: #999; }
.after-apps { margin-left: 19px; }
.after-file { margin-left: 20px; }
.after-save { margin-left: 19px; }
.after-undo { margin-left: 15px; }
.tab {
  flex: 1;
  display: flex;
  align-items: center;
  margin-top: 4px;
  padding-right: 6px;
  background: #f1f1f1;
  border-radius: 4px 4px 0 0;
}
.tab h1 {
  flex: 1;
  display: flex;
  justify-content: center;
  align-items: center;
  gap: 4px;
  font-size: 12px;
  color: #666;
}
.newtab { width: 28px; margin: 4px 0 0 4px; background: #b8b8b8; border-radius: 4px 4px 0 0; }
.account { display: flex; gap: 17px; padding: 0 8px 0 12px; }
.user { margin: 0 9px 0 7px; }

.workspace { flex: 1; display: grid; grid-template: minmax(0, 1fr) / minmax(0, 1fr); min-height: 0; }
.canvas, .overlay { grid-area: 1 / 1; width: 100%; height: 100%; }
.overlay { z-index: 1; display: grid; grid-template: 1fr auto / 1fr auto; padding: 4px 0 4px 4px; }
.minor { stroke: #000; stroke-opacity: .065; shape-rendering: crispEdges; }
.major { stroke: #000; stroke-opacity: .14; shape-rendering: crispEdges; }
.axis-z { stroke: #7fcb7c; shape-rendering: crispEdges; }
.axis-x { stroke: #d98880; shape-rendering: crispEdges; }
.canvas text { font-size: 15px; }
.scale { fill: #888; }
.value { fill: #3a3a3a; }
.dim { stroke: #111; fill: none; shape-rendering: crispEdges; }
.heavy { stroke: #666; stroke-width: 2; fill: none; shape-rendering: crispEdges; }
.arc { stroke: #111; fill: none; }
.sketch { stroke: #1f55d0; fill: none; shape-rendering: crispEdges; }
.sketch .wide { stroke: #6c96ee; stroke-width: 2; }
.curve { stroke: #2457cf; fill: none; }
.points { fill: #333; stroke: #777; }
.glyph { stroke: #888; fill: none; stroke-width: 4; }
.glyph-core { stroke: #e4e0da; fill: none; stroke-width: 2; }
.glyph path { stroke-width: inherit; }

.left { grid-area: 1 / 1; justify-self: start; }
.toolbar {
  display: grid;
  grid-template-columns: 118px 179px 393px 135px 92px 98px 74px 64px 59px 74px 74px 69px 99px;
  height: 60px;
  background: #f1f1f1;
}
.toolbar > * + * { position: relative; }
.toolbar > * + *::before {
  content: "";
  position: absolute;
  left: -1px;
  top: 4px;
  height: 51px;
  border-left: 2px solid #dcdcdc;
}
.workspace-switch { display: flex; align-items: center; gap: 33px; padding-left: 6px; font-weight: bold; }
.workspace-switch .caret { margin-left: 6px; }
.grip { width: 5px; height: 23px; border: solid #bbb; border-width: 0 1px; }
.grip.small { width: 4px; height: 14px; border-color: #777; }
.tools { display: flex; justify-content: center; height: 42px; }
.tools button { width: 43px; }
.tools .active { width: 38px; height: 38px; margin-top: 2px; background: #0d96d9; }
.menu { width: 100%; height: 18px; padding-right: 3px; padding-bottom: 1px; font-size: 10px; }

.panel {
  display: flex;
  align-items: center;
  width: 300px;
  height: 25px;
  margin-top: 4px;
  padding: 0 1px 0 4px;
  border: 2px solid #c8c8c8;
  border-width: 1px 1px 2px 1px;
  background: #f0f0f0;
}
.panel h2 { flex: 1; margin-left: 10px; font-size: 10px; font-weight: normal; color: #555; }
.panel .grip { margin-left: 6px; }
.comments { margin: 0; padding-left: 14px; border-top: 0; }

.tree { display: flex; flex-direction: column; gap: 4px; margin: 5px 0 0; padding: 0; list-style: none; }
.tree li { display: flex; align-items: center; gap: 9px; height: 20px; padding-left: 36px; }
.tree .root { gap: 8px; padding-left: 17px; }
.chip { display: flex; align-items: center; gap: 13px; height: 20px; padding: 0 10px 0 2px; background: #f1f1f1; }
.chip .light { margin-left: 1px; margin-right: -1px; }
.root .chip { gap: 4px; padding: 0 8px 0 2px; }
.mark { width: 3px; height: 16px; background: #cf9be0; }
.root strong { display: flex; align-items: center; gap: 15px; height: 16px; margin-left: 4px; padding: 0 12px 0 3px; background: #999; color: #fff; }
.root input {
  appearance: none;
  width: 13px;
  height: 13px;
  margin: 0;
  border: 1px solid #222;
  border-radius: 50%;
  background: radial-gradient(circle, #222 2px, #fff 3px);
}

.right { grid-area: 1 / 2; display: flex; flex-direction: column; align-items: flex-end; padding-right: 3px; }
.viewcube { margin: 9px 7px 85px 0; }
.face { font-family: Roboto, sans-serif; font-weight: bold; fill: #8d9094; }
.canvas ~ .overlay .face { font-size: 12px; }
.z { font: bold 14px "Liberation Sans", sans-serif; fill: #8f8ff0; }
.x { font: bold 14px "Liberation Sans", sans-serif; fill: #f09090; }
.palette { display: flex; flex-direction: column; width: 22px; height: 175px; background: #f1f1f1; border-bottom: 10px solid #cbcbcb; }
.palette button { height: 18px; background: #cbcbcb; }
.palette span { writing-mode: vertical-rl; margin: 2px 4px; font-size: 9px; }

.bottom { grid-area: 2 / 1 / 3 / 3; display: grid; grid-template-columns: 1fr auto 1fr; align-items: center; margin-left: -4px; }
.comments { margin-left: 4px; }
.navbar { display: flex; align-items: center; height: 24px; gap: 10px; padding: 0 10px 0 4px; background: #f1f1f1; }
.navbar .caret { margin-left: 3px; }
.navbar .home { margin-left: -2px; }
.navbar .display { margin-left: 5px; }
.navbar button:nth-child(n + 7) { margin-left: -4px; }
.status { justify-self: end; margin-right: 35px; font-size: 12px; color: #222; }

.timeline {
  flex: none;
  display: flex;
  height: 49px;
  padding: 0 12px 0 11px;
  border-top: 2px solid #c6c6c6;
  background: #f1f1f1;
}
.playback { display: flex; gap: 12px; width: 131px; }
.history { width: 117px; padding-top: 7px; }
.features { display: flex; padding-top: 5px; background: linear-gradient(#d697e0 6px, transparent 6px); }
.features button { width: 24px; height: 24px; flex: none; border-radius: 2px; }
.features .active { background: #0d96d9; }
.ties { margin-left: 11px; }
.playhead { margin: 9px 0 0 -3px; }
.prefs { margin-left: auto; }
```
